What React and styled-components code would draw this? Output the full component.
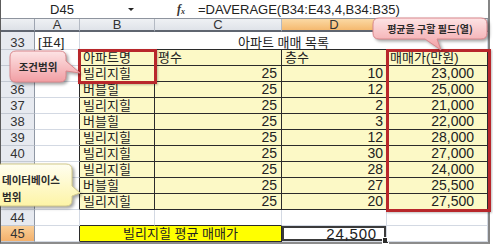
import React from "react";
import styled, { createGlobalStyle } from "styled-components";

const GRID = "#d3d9e3";
const INK = "#2b2b2b";
const PALE = "#fcf9c6";
const BRIGHT = "#ffff00";
const RED = "#b8272b";

const ROWS = [
  ["빌리지힐", 25, 10, "23,000"],
  ["버블힐", 25, 12, "25,000"],
  ["빌리지힐", 25, 2, "21,000"],
  ["버블힐", 25, 3, "22,000"],
  ["빌리지힐", 25, 12, "28,000"],
  ["빌리지힐", 25, 30, "27,000"],
  ["빌리지힐", 25, 28, "24,000"],
  ["버블힐", 25, 27, "25,500"],
  ["빌리지힐", 25, 20, "27,500"],
];

const GlobalStyle = createGlobalStyle`
  html, body { margin: 0; padding: 0; background: #fff; }
  body { width: 493px; height: 248px; overflow: hidden; }
`;

const Frame = styled.div`
  position: relative;
  width: 493px;
  height: 248px;
  overflow: hidden;
  background: #fff;
  font-family: "Liberation Sans", "Noto Sans CJK KR", sans-serif;
  color: #222;
`;

const Window = styled.div`
  width: 490px;
  height: 244px;
  box-sizing: border-box;
  border-left: 1px solid #5c5c5c;
  border-right: 2px solid #858585;
  border-bottom: 2px solid #8c8c8c;
  display: flex;
  flex-direction: column;
`;

// formula bar
const FormulaBar = styled.div`
  display: flex;
  align-items: center;
  height: 19px;
  flex: none;
  box-sizing: border-box;
  border-bottom: 1px solid #8e949e;
  background: #fff;
  font-size: 13px;
`;

const NameBox = styled.div`
  width: 122px;
  text-align: center;
  padding-top: 1px;
`;

const DropBtn = styled.div`
  width: 16px;
  display: flex;
  justify-content: center;
  &::after {
    content: "";
    border-left: 3px solid transparent;
    border-right: 3px solid transparent;
    border-top: 3px solid #222;
  }
`;

const Spacer = styled.div`
  width: 38px;
`;

const Fx = styled.div`
  width: 21px;
  font-family: "Liberation Serif", serif;
  font-style: italic;
  font-weight: bold;
  font-size: 12px;
  color: #333;
  sub {
    font-size: 8px;
    vertical-align: -1px;
  }
`;

const Formula = styled.div`
  white-space: nowrap;
  padding-top: 1px;
`;

// sheet grid
const Sheet = styled.div`
  display: grid;
  grid-template-columns: 34px 45px 75px 127px 105px 101px;
  grid-template-rows: 13px 18px repeat(12, 16px);
`;

const Corner = styled.div`
  background: linear-gradient(#eef0f3, #dde1e7);
  border-right: 1px solid #9ea5b1;
  border-bottom: 2px solid #5f6570;
`;

const ColHead = styled.div`
  display: flex;
  align-items: center;
  justify-content: center;
  font-size: 13px;
  line-height: 11px;
  color: #333;
  background: ${(p) =>
    p.$active ? "linear-gradient(#fbd9a4, #f5b96f)" : "linear-gradient(#eff1f4, #dfe3e9)"};
  border-right: 1px solid #b4bac4;
  border-bottom: 2px solid #5f6570;
`;

const RowHead = styled.div`
  display: flex;
  align-items: center;
  justify-content: center;
  padding-top: ${(p) => (p.$tall ? 3 : 0)}px;
  font-size: 13px;
  color: #333;
  background: ${(p) => (p.$active ? "linear-gradient(#f9cf98, #f3b06b)" : "#e7eaf0")};
  border-right: 1px solid #8f97a4;
  border-bottom: 1px solid #c3c9d3;
`;

const Cell = styled.div`
  grid-column: span ${(p) => p.$span || 1};
  position: relative;
  box-sizing: border-box;
  display: flex;
  align-items: center;
  justify-content: ${(p) =>
    p.$align === "right" ? "flex-end" : p.$align === "center" ? "center" : "flex-start"};
  padding: ${(p) => p.$pt || 0}px ${(p) => p.$pr ?? 3}px 0 ${(p) => p.$pl ?? 3}px;
  background: ${(p) => p.$bg || "#fff"};
  border-right: 1px solid ${(p) => p.$rb || GRID};
  border-bottom: 1px solid ${(p) => p.$bb || GRID};
  font-size: 13px;
  line-height: 15px;
  white-space: nowrap;
  color: #222;
`;

const Num = styled.span`
  font-size: ${(p) => p.$size || 14}px;
  letter-spacing: ${(p) => p.$ls || 0}px;
`;

const Selected = styled(Cell)`
  box-shadow: inset 0 0 0 2px #3b3b3b;
`;

const FillHandle = styled.span`
  position: absolute;
  right: -3px;
  bottom: -3px;
  width: 5px;
  height: 5px;
  background: #2b2b2b;
  border: 1px solid #fff;
`;

// overlays
const RedBox = styled.div`
  position: absolute;
  left: ${(p) => p.$x}px;
  top: ${(p) => p.$y}px;
  width: ${(p) => p.$w}px;
  height: ${(p) => p.$h}px;
  box-sizing: border-box;
  border: 3px solid ${RED};
  z-index: 2;
  box-shadow: 1px 1px 2px rgba(0, 0, 0, 0.25);
`;

const Bubble = styled.div`
  position: absolute;
  left: ${(p) => p.$x}px;
  top: ${(p) => p.$y}px;
  width: ${(p) => p.$w}px;
  height: ${(p) => p.$h}px;
  z-index: 3;
`;

const BubbleShape = styled.svg`
  position: absolute;
  left: 0;
  top: 0;
  width: 100%;
  height: 100%;
  overflow: visible;
  filter: drop-shadow(2px 2px 1.5px rgba(0, 0, 0, 0.35));
`;

const BubbleText = styled.div`
  position: relative;
  height: 100%;
  box-sizing: border-box;
  display: flex;
  flex-direction: column;
  justify-content: center;
  align-items: ${(p) => (p.$left ? "flex-start" : "center")};
  padding: ${(p) => p.$pad || "0"};
  font-family: "Noto Sans CJK KR", sans-serif;
  font-weight: bold;
  font-size: ${(p) => p.$size || 10.5}px;
  line-height: ${(p) => p.$lh || 14}px;
  color: #2a2a2a;
  white-space: nowrap;
`;

const PALETTES = {
  pink: { top: "#fde4e5", bottom: "#f19ea3", stroke: "#d9868b" },
  yellow: { top: "#fffef0", bottom: "#fdf4a6", stroke: "#d2c98a" },
};

function bubblePath(w, h, r, t) {
  if (t.side === "right") {
    return `M${r},0 H${w - r} Q${w},0 ${w},${r} V${t.a} L${t.px},${t.py} L${w},${t.b} V${h - r} Q${w},${h} ${w - r},${h} H${r} Q0,${h} 0,${h - r} V${r} Q0,0 ${r},0 Z`;
  }
  return `M${r},0 H${w - r} Q${w},0 ${w},${r} V${h - r} Q${w},${h} ${w - r},${h} H${t.b} L${t.px},${t.py} L${t.a},${h} H${r} Q0,${h} 0,${h - r} V${r} Q0,0 ${r},0 Z`;
}

function Callout({ id, x, y, w, h, tail, color, children, ...text }) {
  const c = PALETTES[color];
  return (
    <Bubble $x={x} $y={y} $w={w} $h={h}>
      <BubbleShape viewBox={`0 0 ${w} ${h}`}>
        <defs>
          <linearGradient id={id} x1="0" y1="0" x2="0" y2="1">
            <stop offset="0" stopColor={c.top} />
            <stop offset="1" stopColor={c.bottom} />
          </linearGradient>
        </defs>
        <path d={bubblePath(w, h, 6, tail)} fill={`url(#${id})`} stroke={c.stroke} strokeWidth="1" />
      </BubbleShape>
      <BubbleText {...text}>{children}</BubbleText>
    </Bubble>
  );
}

const App = () => {
  return (
    <Frame>
      <GlobalStyle />
      <Window>
        <FormulaBar>
          <NameBox>D45</NameBox>
          <DropBtn />
          <Spacer />
          <Fx>
            f<sub>x</sub>
          </Fx>
          <Formula>=DAVERAGE(B34:E43,4,B34:B35)</Formula>
        </FormulaBar>

        <Sheet>
          <Corner />
          {["A", "B", "C", "D", "E"].map((c) => (
            <ColHead key={c} $active={c === "D"}>
              {c}
            </ColHead>
          ))}

          <RowHead $tall>33</RowHead>
          <Cell $pt={3}>[표4]</Cell>
          <Cell $span={4} $align="center" $bb={INK} $pt={3}>
            아파트 매매 목록
          </Cell>

          <RowHead>34</RowHead>
          <Cell $rb={INK} />
          <Cell $bg={PALE} $rb={INK} $bb={INK}>아파트명</Cell>
          <Cell $bg={PALE} $rb={INK} $bb={INK}>평수</Cell>
          <Cell $bg={PALE} $rb={INK} $bb={INK}>층수</Cell>
          <Cell $bg={PALE} $rb={INK} $bb={INK}>매매가(만원)</Cell>

          {ROWS.map(([name, size, floor, price], i) => (
            <React.Fragment key={i}>
              <RowHead>{35 + i}</RowHead>
              <Cell $rb={INK} />
              <Cell $bg={PALE} $rb={INK} $bb={INK}>{name}</Cell>
              <Cell $bg={PALE} $rb={INK} $bb={INK} $align="right" $pr={4}>
                <Num>{size}</Num>
              </Cell>
              <Cell $bg={PALE} $rb={INK} $bb={INK} $align="right" $pr={3}>
                <Num>{floor}</Num>
              </Cell>
              <Cell $bg={PALE} $rb={INK} $bb={INK} $align="right" $pr={13}>
                <Num>{price}</Num>
              </Cell>
            </React.Fragment>
          ))}

          <RowHead>44</RowHead>
          <Cell />
          <Cell $bb={INK} />
          <Cell $bb={INK} />
          <Cell />
          <Cell />

          <RowHead $active>45</RowHead>
          <Cell $rb={INK} />
          <Cell $span={2} $bg={BRIGHT} $rb={INK} $bb={INK} $align="center">
            빌리지힐 평균 매매가
          </Cell>
          <Selected $align="right" $pr={9}>
            <Num $size={15} $ls={0.8}>24,500</Num>
            <FillHandle />
          </Selected>
          <Cell />
        </Sheet>
      </Window>

      <RedBox $x={78} $y={49} $w={79} $h={35} />
      <RedBox $x={386} $y={49} $w={105} $h={163} />

      <Callout
        id="gPinkA"
        color="pink"
        x={10}
        y={51}
        w={56}
        h={31}
        tail={{ side: "right", a: 10, b: 20, px: 70, py: 22 }}
      >
        조건범위
      </Callout>

      <Callout
        id="gYellow"
        color="yellow"
        x={-4}
        y={164}
        w={76}
        h={42}
        tail={{ side: "right", a: 22, b: 32, px: 84, py: 29 }}
        $left
        $pad="5px 0 0 6px"
        $lh={17}
      >
        <span>데이터베이스</span>
        <span>범위</span>
      </Callout>

      <Callout
        id="gPinkB"
        color="pink"
        x={373}
        y={18}
        w={114}
        h={21}
        tail={{ side: "bottom", a: 52, b: 64, px: 68, py: 32 }}
        $size={10}
      >
        평균을 구할 필드(열)
      </Callout>
    </Frame>
  );
};

export default App;
